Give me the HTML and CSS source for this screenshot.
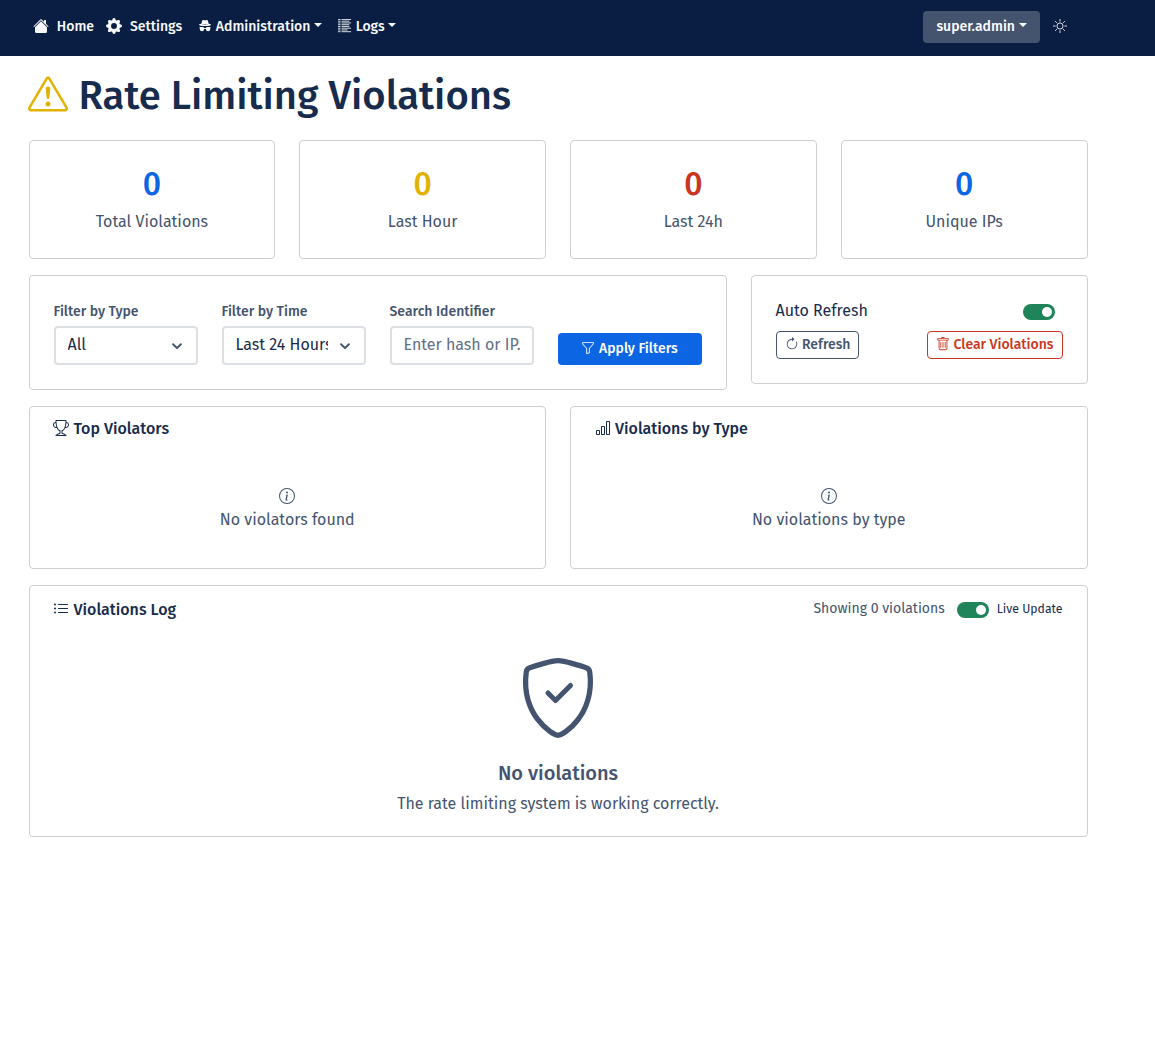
FILE: index.html
```html
<!DOCTYPE html>
<html lang="en">
<head>
<meta charset="utf-8">
<title>Rate Limiting Violations</title>
<link rel="stylesheet" href="styles.css">
</head>
<body>
<svg class="sprite" aria-hidden="true">
  <symbol id="house" viewBox="0 0 16 16"><path d="M8.707 1.5a1 1 0 0 0-1.414 0L.646 8.146a.5.5 0 0 0 .708.708L8 2.207l6.646 6.647a.5.5 0 0 0 .708-.708L13 5.793V2.5a.5.5 0 0 0-.5-.5h-1a.5.5 0 0 0-.5.5v1.293z"/><path d="m8 3.293 6 6V13.5a1.5 1.5 0 0 1-1.5 1.5h-9A1.5 1.5 0 0 1 2 13.5V9.293z"/></symbol>
  <symbol id="gear" viewBox="0 0 16 16"><path d="M9.405 1.05c-.413-1.4-2.397-1.4-2.81 0l-.1.34a1.464 1.464 0 0 1-2.105.872l-.31-.17c-1.283-.698-2.686.705-1.987 1.987l.169.311c.446.82.023 1.841-.872 2.105l-.34.1c-1.4.413-1.4 2.397 0 2.81l.34.1a1.464 1.464 0 0 1 .872 2.105l-.17.31c-.698 1.283.705 2.686 1.987 1.987l.311-.169a1.464 1.464 0 0 1 2.105.872l.1.34c.413 1.4 2.397 1.4 2.81 0l.1-.34a1.464 1.464 0 0 1 2.105-.872l.31.17c1.283.698 2.686-.705 1.987-1.987l-.169-.311a1.464 1.464 0 0 1 .872-2.105l.34-.1c1.4-.413 1.4-2.397 0-2.81l-.34-.1a1.464 1.464 0 0 1-.872-2.105l.17-.31c.698-1.283-.705-2.686-1.987-1.987l-.311.169a1.464 1.464 0 0 1-2.105-.872zM8 10.93a2.929 2.929 0 1 1 0-5.86 2.929 2.929 0 0 1 0 5.858z"/></symbol>
  <symbol id="incognito" viewBox="0 0 16 16"><path fill-rule="evenodd" d="m4.736 1.968-.892 3.269-.014.058C2.113 5.568 1 6.006 1 6.5 1 7.328 4.134 8 8 8s7-.672 7-1.5c0-.494-1.113-.932-2.83-1.205l-.014-.058-.892-3.27c-.146-.533-.698-.849-1.239-.734C9.411 1.363 8.62 1.5 8 1.5s-1.411-.136-2.025-.267c-.541-.115-1.093.2-1.239.735m.015 3.867a.25.25 0 0 1 .274-.224c.9.092 1.91.143 2.975.143a30 30 0 0 0 2.975-.143.25.25 0 0 1 .05.498c-.918.093-1.944.145-3.025.145s-2.107-.052-3.025-.145a.25.25 0 0 1-.224-.274M2 10.5q.001-.264.085-.5H2a.5.5 0 0 1 0-1h3.5a1.5 1.5 0 0 1 1.488 1.312 3.5 3.5 0 0 1 2.024 0A1.5 1.5 0 0 1 10.5 9H14a.5.5 0 0 1 0 1h-.085q.084.236.085.5v1a2.5 2.5 0 0 1-5 0v-.14l-.21-.07a2.5 2.5 0 0 0-1.58 0l-.21.07v.14a2.5 2.5 0 0 1-5 0z"/></symbol>
  <symbol id="columns" viewBox="0 0 16 16"><path fill="none" stroke="currentColor" stroke-linecap="round" d="M.5.5h2m2 0h10M.5 2.5h2m2 0h8M.5 4.5h2m2 0h10M.5 6.5h2m2 0h8M.5 8.5h2m2 0h8M.5 10.5h2m2 0h10M.5 12.5h2m2 0h6M.5 14.5h2m2 0h10"/></symbol>
  <symbol id="sun" viewBox="0 0 16 16"><path fill="none" stroke="currentColor" stroke-linecap="round" d="M8 .5v2m0 11v2M.5 8h2m11 0h2M2.7 2.7l1.4 1.4m7.8 7.8 1.4 1.4M2.7 13.3l1.4-1.4m7.8-7.8 1.4-1.4"/><circle cx="8" cy="8" r="3.5" fill="none" stroke="currentColor"/></symbol>
  <symbol id="warning" viewBox="0 0 16 16"><path d="M7.938 2.016A.13.13 0 0 1 8.002 2a.13.13 0 0 1 .063.016.15.15 0 0 1 .054.057l6.857 11.667c.036.06.035.124.002.183a.2.2 0 0 1-.054.06.1.1 0 0 1-.066.017H1.146a.1.1 0 0 1-.066-.017.2.2 0 0 1-.054-.06.18.18 0 0 1 .002-.183L7.884 2.073a.15.15 0 0 1 .054-.057m1.044-.45a1.13 1.13 0 0 0-1.96 0L.165 13.233c-.457.778.091 1.767.98 1.767h13.713c.889 0 1.438-.99.98-1.767z"/><path d="M7.002 12a1 1 0 1 1 2 0 1 1 0 0 1-2 0M7.1 5.995a.905.905 0 1 1 1.8 0l-.35 3.507a.552.552 0 0 1-1.1 0z"/></symbol>
  <symbol id="chevron" viewBox="0 0 16 16"><path fill="none" stroke="currentColor" stroke-linecap="round" stroke-linejoin="round" stroke-width="2.3" d="m3.6 6 4.4 4.4L12.4 6"/></symbol>
  <symbol id="funnel" viewBox="0 0 16 16"><path d="M1.5 1.5A.5.5 0 0 1 2 1h12a.5.5 0 0 1 .5.5v2a.5.5 0 0 1-.128.334L10 8.692V13.5a.5.5 0 0 1-.342.474l-3 1A.5.5 0 0 1 6 14.5V8.692L1.628 3.834A.5.5 0 0 1 1.5 3.5zm1 .5v1.308l4.372 4.858A.5.5 0 0 1 7 8.5v5.306l2-.666V8.5a.5.5 0 0 1 .128-.334L13.5 3.308V2z"/></symbol>
  <symbol id="clockwise" viewBox="0 0 16 16"><path d="M8 3a5 5 0 1 0 4.546 2.914.5.5 0 0 1 .908-.417A6 6 0 1 1 8 2z"/><path d="M8 4.466V.534a.25.25 0 0 1 .41-.192l2.36 1.966c.12.1.12.284 0 .384L8.41 4.658A.25.25 0 0 1 8 4.466"/></symbol>
  <symbol id="trash" viewBox="0 0 16 16"><path d="M5.5 5.5A.5.5 0 0 1 6 6v6a.5.5 0 0 1-1 0V6a.5.5 0 0 1 .5-.5m2.5 0a.5.5 0 0 1 .5.5v6a.5.5 0 0 1-1 0V6a.5.5 0 0 1 .5-.5m3 .5a.5.5 0 0 0-1 0v6a.5.5 0 0 0 1 0z"/><path d="M14.5 3a1 1 0 0 1-1 1H13v9a2 2 0 0 1-2 2H5a2 2 0 0 1-2-2V4h-.5a1 1 0 0 1-1-1V2a1 1 0 0 1 1-1H6a1 1 0 0 1 1-1h2a1 1 0 0 1 1 1h3.5a1 1 0 0 1 1 1zM4.118 4 4 4.059V13a1 1 0 0 0 1 1h6a1 1 0 0 0 1-1V4.059L11.882 4zM2.5 3h11V2h-11z"/></symbol>
  <symbol id="trophy" viewBox="0 0 16 16"><path d="M2.5.5A.5.5 0 0 1 3 0h10a.5.5 0 0 1 .5.5q0 .807-.034 1.536a3 3 0 1 1-1.133 5.89c-.79 1.865-1.878 2.777-2.833 3.011v2.173l1.425.356c.194.048.377.135.537.255L13.3 15.1a.5.5 0 0 1-.3.9H3a.5.5 0 0 1-.3-.9l1.838-1.379c.16-.12.343-.207.537-.255L6.5 13.11v-2.173c-.955-.234-2.043-1.146-2.833-3.012a3 3 0 1 1-1.132-5.89A33 33 0 0 1 2.5.5m.099 2.54a2 2 0 0 0 .72 3.935c-.333-1.05-.588-2.346-.72-3.935m10.083 3.935a2 2 0 0 0 .72-3.935c-.133 1.59-.388 2.885-.72 3.935M3.504 1q.01.775.056 1.469c.13 2.028.457 3.546.87 4.667C5.294 9.48 6.484 10 7 10a.5.5 0 0 1 .5.5v2.61a1 1 0 0 1-.757.97l-1.426.356a.5.5 0 0 0-.179.085L4.5 15h7l-.638-.479a.5.5 0 0 0-.18-.085l-1.425-.356a1 1 0 0 1-.757-.97V10.5A.5.5 0 0 1 9 10c.516 0 1.706-.52 2.57-2.864.413-1.12.74-2.64.87-4.667q.045-.694.056-1.469z"/></symbol>
  <symbol id="bars" viewBox="0 0 16 16"><path d="M4 11H2v3h2zm5-4H7v7h2zm5-5v12h-2V2zm-2-1a1 1 0 0 0-1 1v12a1 1 0 0 0 1 1h2a1 1 0 0 0 1-1V2a1 1 0 0 0-1-1zM6 7a1 1 0 0 1 1-1h2a1 1 0 0 1 1 1v7a1 1 0 0 1-1 1H7a1 1 0 0 1-1-1zm-5 4a1 1 0 0 1 1-1h2a1 1 0 0 1 1 1v3a1 1 0 0 1-1 1H2a1 1 0 0 1-1-1z"/></symbol>
  <symbol id="info" viewBox="0 0 16 16"><path d="M8 15A7 7 0 1 1 8 1a7 7 0 0 1 0 14m0 1A8 8 0 1 0 8 0a8 8 0 0 0 0 16"/><path d="m8.93 6.588-2.29.287-.082.38.45.083c.294.07.352.176.288.469l-.738 3.468c-.194.897.105 1.319.808 1.319.545 0 1.178-.252 1.465-.598l.088-.416c-.2.176-.492.246-.686.246-.275 0-.375-.193-.304-.533zM9 4.5a1 1 0 1 1-2 0 1 1 0 0 1 2 0"/></symbol>
  <symbol id="list" viewBox="0 0 16 16"><path d="M5 11.5a.5.5 0 0 1 .5-.5h9a.5.5 0 0 1 0 1h-9a.5.5 0 0 1-.5-.5m0-4a.5.5 0 0 1 .5-.5h9a.5.5 0 0 1 0 1h-9a.5.5 0 0 1-.5-.5m0-4a.5.5 0 0 1 .5-.5h9a.5.5 0 0 1 0 1h-9a.5.5 0 0 1-.5-.5m-3 1a1 1 0 1 0 0-2 1 1 0 0 0 0 2m0 4a1 1 0 1 0 0-2 1 1 0 0 0 0 2m0 4a1 1 0 1 0 0-2 1 1 0 0 0 0 2"/></symbol>
  <symbol id="shield" viewBox="0 0 16 16"><path d="M5.338 1.59a61 61 0 0 0-2.837.856.48.48 0 0 0-.328.39c-.554 4.157.726 7.19 2.253 9.188a10.7 10.7 0 0 0 2.287 2.233c.346.244.652.42.893.533q.18.085.293.118a1 1 0 0 0 .101.025 1 1 0 0 0 .1-.025q.114-.034.294-.118c.24-.113.547-.29.893-.533a10.7 10.7 0 0 0 2.287-2.233c1.527-1.997 2.807-5.031 2.253-9.188a.48.48 0 0 0-.328-.39c-.651-.213-1.75-.56-2.837-.855C9.552 1.29 8.531 1.067 8 1.067c-.53 0-1.552.223-2.662.524zM5.072.56C6.157.265 7.31 0 8 0s1.843.265 2.928.56c1.11.3 2.229.655 2.887.87a1.54 1.54 0 0 1 1.044 1.262c.596 4.477-.787 7.795-2.465 9.99a11.8 11.8 0 0 1-2.517 2.453 7 7 0 0 1-1.048.625c-.28.132-.581.24-.829.24s-.548-.108-.829-.24a7 7 0 0 1-1.048-.625 11.8 11.8 0 0 1-2.517-2.453C1.928 10.487.545 7.169 1.141 2.692A1.54 1.54 0 0 1 2.185 1.43 63 63 0 0 1 5.072.56"/><path d="M10.854 5.146a.5.5 0 0 1 0 .708l-3 3a.5.5 0 0 1-.708 0l-1.5-1.5a.5.5 0 1 1 .708-.708L7.5 7.793l2.646-2.647a.5.5 0 0 1 .708 0"/></symbol>
</svg>

<nav class="navbar">
  <a class="nav-item nav-home"><svg class="icon icon-16"><use href="#house"/></svg><span>Home</span></a>
  <a class="nav-item nav-settings"><svg class="icon icon-16"><use href="#gear"/></svg><span>Settings</span></a>
  <a class="nav-item nav-admin"><svg class="icon icon-14"><use href="#incognito"/></svg><span>Administration</span><i class="caret"></i></a>
  <a class="nav-item nav-logs"><svg class="icon icon-14"><use href="#columns"/></svg><span>Logs</span><i class="caret"></i></a>
  <button class="user-menu"><span>super.admin</span><i class="caret"></i></button>
  <svg class="icon icon-14 theme"><use href="#sun"/></svg>
</nav>

<main class="page">
  <h1 class="title"><svg class="icon title-icon"><use href="#warning"/></svg><span>Rate Limiting Violations</span></h1>

  <section class="stats">
    <div class="card stat"><strong class="stat-value blue">0</strong><span>Total Violations</span></div>
    <div class="card stat"><strong class="stat-value yellow">0</strong><span>Last Hour</span></div>
    <div class="card stat"><strong class="stat-value red">0</strong><span>Last 24h</span></div>
    <div class="card stat"><strong class="stat-value blue">0</strong><span>Unique IPs</span></div>
  </section>

  <section class="controls">
    <form class="card filters">
      <div class="field"><label>Filter by Type</label><div class="input"><span class="value">All</span><svg class="icon chevron"><use href="#chevron"/></svg></div></div>
      <div class="field"><label>Filter by Time</label><div class="input"><span class="value">Last 24 Hours</span><svg class="icon chevron"><use href="#chevron"/></svg></div></div>
      <div class="field"><label>Search Identifier</label><div class="input placeholder"><span class="value">Enter hash or IP...</span></div></div>
      <button type="button" class="apply"><svg class="icon icon-14"><use href="#funnel"/></svg><span>Apply Filters</span></button>
    </form>
    <div class="card refresh-card">
      <div class="refresh-row"><span>Auto Refresh</span><span class="switch"></span></div>
      <div class="button-row">
        <button class="outline"><svg class="icon icon-14"><use href="#clockwise"/></svg><span>Refresh</span></button>
        <button class="outline danger"><svg class="icon icon-14"><use href="#trash"/></svg><span>Clear Violations</span></button>
      </div>
    </div>
  </section>

  <section class="panels">
    <div class="card panel"><h2 class="panel-head"><svg class="icon icon-16"><use href="#trophy"/></svg><span>Top Violators</span></h2>
      <div class="empty"><svg class="icon icon-16"><use href="#info"/></svg><span>No violators found</span></div></div>
    <div class="card panel"><h2 class="panel-head"><svg class="icon icon-16"><use href="#bars"/></svg><span>Violations by Type</span></h2>
      <div class="empty"><svg class="icon icon-16"><use href="#info"/></svg><span>No violations by type</span></div></div>
  </section>

  <section class="card log">
    <header class="log-head">
      <h2 class="panel-head"><svg class="icon icon-16"><use href="#list"/></svg><span>Violations Log</span></h2>
      <div class="log-tools"><span class="showing">Showing 0 violations</span><span class="switch"></span><span class="live">Live Update</span></div>
    </header>
    <div class="log-empty">
      <svg class="icon shield"><use href="#shield"/></svg>
      <h3>No violations</h3>
      <p>The rate limiting system is working correctly.</p>
    </div>
  </section>
</main>
</body>
</html>
```
FILE: styles.css
```css
* { box-sizing: border-box; }
body { margin: 0; background: #fff; color: #172b4d; font: 400 16px/24px "Fira Sans", "Noto Sans", sans-serif; }
h1, h2, h3, p { margin: 0; font-weight: 500; }
button { margin: 0; font: inherit; white-space: nowrap; }
span { white-space: nowrap; }
.sprite { display: none; }
.icon { display: block; flex: none; fill: currentColor; }
.icon-14 { width: 14px; height: 14px; }
.icon-16 { width: 16px; height: 16px; }
.caret { border-top: 4.2px solid; border-left: 4.2px solid transparent; border-right: 4.2px solid transparent; margin-left: 3.6px; margin-top: -4px; }

.navbar { height: 56px; padding: 0 88.5px 2px 32.5px; background: #091e42; color: #f7f8f9; display: flex; align-items: center; font-size: 14px; font-weight: 500; }
.navbar .icon { margin-top: -2px; }
.nav-item { display: flex; align-items: center; }
.nav-home .icon, .nav-settings .icon { margin-right: 8.3px; }
.nav-home { margin-right: 11.7px; }
.nav-settings { margin-right: 16px; }
.nav-admin .icon, .nav-logs .icon { margin-right: 3.7px; }
.nav-admin { margin-right: 16px; }
.user-menu { margin-left: auto; margin-right: 12.5px; width: 117px; height: 32px; border: 0; border-radius: 4px; background: #44546f; color: #fff; display: flex; align-items: center; justify-content: center; padding: 0; }

.page { width: 1059px; margin-left: 28.5px; padding-top: 16px; }
.title { height: 48px; display: flex; align-items: center; gap: 10.5px; font-size: 40px; line-height: 48px; }
.title-icon { width: 40px; height: 40px; color: #e2b203; margin: -4px 0 0 -.5px; }
.card { border: 1px solid #cfcfd1; border-radius: 4px; background: #fff; }

.stats { margin-top: 20px; display: grid; grid-template-columns: repeat(4, 1fr); gap: 24px; }
.stat { height: 119px; padding-top: 24px; display: flex; flex-direction: column; align-items: center; gap: 13px; color: #44546f; }
.stat-value { font-size: 32px; line-height: 38px; font-weight: 500; height: 32px; }
.blue { color: #0c66e4; }
.yellow { color: #e2b203; }
.red { color: #ca3521; }

.controls { margin-top: 16px; display: grid; grid-template-columns: 698px 337px; gap: 24px; align-items: start; }
.filters { height: 115px; padding: 24px; display: grid; grid-template-columns: repeat(4, 144px); gap: 24px; align-items: end; }
.field label { display: block; font-size: 14px; line-height: 20px; font-weight: 500; color: #44546f; margin-bottom: 4px; white-space: nowrap; }
.input { height: 39px; border: 2px solid #dcdfe4; border-radius: 4px; padding: 0 12px; display: flex; align-items: center; gap: 10px; }
.value { flex: 1; min-width: 0; overflow: hidden; margin-top: -1px; }
.placeholder { color: #626f86; }
.chevron { width: 14px; height: 14px; color: #44546f; }
.apply { height: 32px; border: 0; border-radius: 4px; background: #0c66e4; color: #fff; font-size: 14px; font-weight: 500; display: flex; align-items: center; justify-content: center; gap: 3.7px; padding: 0; }
.apply .icon, .outline .icon { margin-top: -2px; }

.refresh-card { height: 109px; padding: 23px 24px; }
.refresh-row { display: flex; justify-content: space-between; align-items: center; height: 24px; padding-right: 8px; }
.switch { width: 32px; height: 16px; border-radius: 8px; background: #1f845a; display: flex; align-items: center; justify-content: flex-end; padding-right: 3px; }
.switch::after { content: ""; width: 10px; height: 10px; border-radius: 5px; background: #fff; }
.refresh-row .switch { margin-top: 2px; }
.button-row { display: flex; justify-content: space-between; margin-top: 8px; }
.outline { height: 28px; padding: 0 8px; border: 1px solid; border-radius: 4px; background: #fff; color: #44546f; font-size: 14px; font-weight: 500; display: flex; align-items: center; gap: 3.5px; }
.danger { color: #ca3521; }

.panels { margin-top: 16px; display: grid; grid-template-columns: 1fr 1fr; gap: 24px; }
.panel { height: 163px; padding: 10px 24px; }
.panel-head { display: flex; align-items: center; gap: 4px; font-size: 16px; line-height: 24px; font-weight: 500; }
.panel-head .icon { margin: -2px .4px 0 -.4px; }
.empty { margin-top: 47px; display: flex; flex-direction: column; align-items: center; gap: 4px; color: #44546f; }

.log { margin-top: 16px; height: 252px; padding: 12px 24px; }
.log-head { display: flex; justify-content: space-between; align-items: center; }
.log-tools { display: flex; align-items: center; margin-top: -2px; }
.log-tools .switch { margin: 1px 8px 0 12px; }
.showing { font-size: 14px; color: #44546f; }
.live { font-size: 12.25px; }
.log-empty { margin-top: 36px; display: flex; flex-direction: column; align-items: center; color: #44546f; }
.shield { width: 80px; height: 80px; }
.log-empty h3 { margin-top: 23px; font-size: 20px; line-height: 24px; }
.log-empty p { margin-top: 7px; font-weight: 400; }
```
